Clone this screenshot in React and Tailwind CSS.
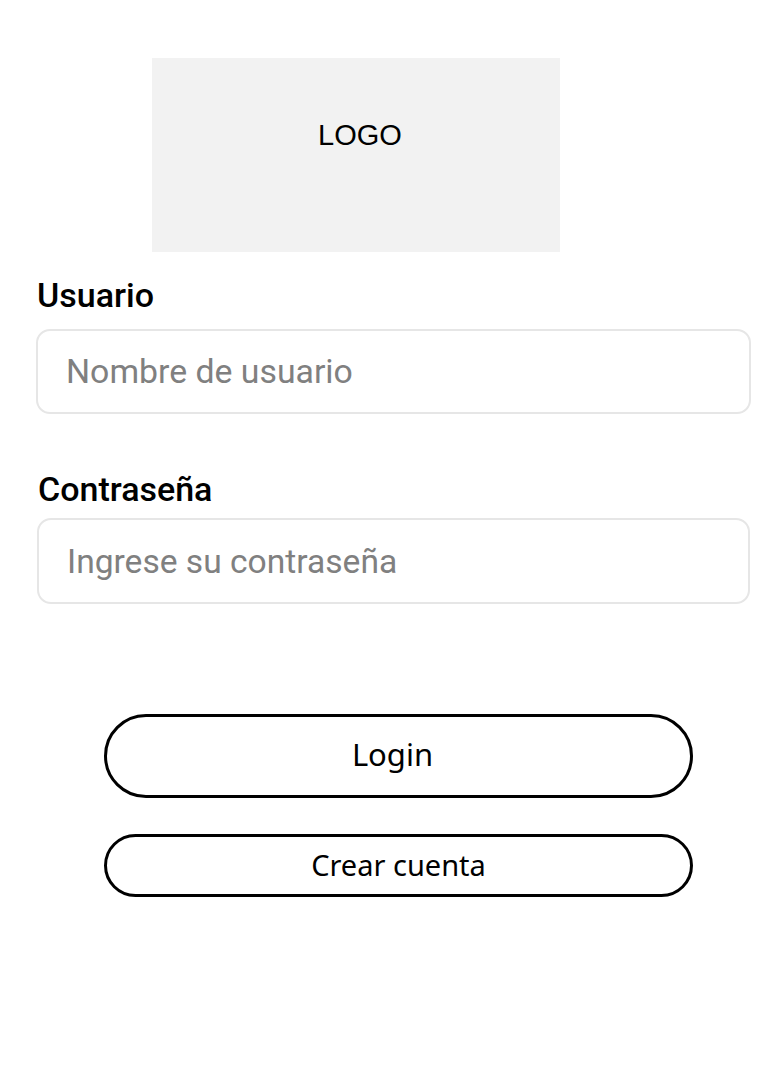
export default function App() {
  return (
    <div className="w-[770px] h-[1080px] bg-white relative overflow-hidden">
      <div className="pt-[58px] pl-[152px]">
        <div className="w-[408px] h-[194px] bg-[#f2f2f2] flex justify-center pt-[61px] pl-[8px]">
          <span className="text-[29px] leading-[33px] text-black" style={{ fontFamily: '"Liberation Sans", Arial, sans-serif' }}>LOGO</span>
        </div>
      </div>
      <div className="pl-[36px] pr-[19px]" style={{ fontFamily: 'Roboto, "Noto Sans", sans-serif' }}>
        <label className="block mt-[24px] pl-[1px] text-[34px] leading-[38px] font-medium text-black">Usuario</label>
        <input
          type="text"
          placeholder="Nombre de usuario"
          className="mt-[15px] block w-[715px] h-[85px] rounded-[14px] border-2 border-[#e6e6e6] px-[28px] text-[33.8px] text-black placeholder:text-[#808080] outline-none bg-white"
        />
        <label className="block mt-[56px] pl-[2px] text-[34px] leading-[38px] font-medium text-black">Contraseña</label>
        <input
          type="password"
          placeholder="Ingrese su contraseña"
          className="mt-[10px] ml-[1px] block w-[713px] h-[86px] rounded-[14px] border-2 border-[#e6e6e6] px-[28px] text-[33.6px] text-black placeholder:text-[#808080] outline-none bg-white"
        />
      </div>
      <div className="pl-[104px] pt-[110px] flex flex-col gap-[36px]" style={{ fontFamily: '"Noto Sans", "Open Sans", sans-serif' }}>
        <button className="w-[589px] h-[84px] rounded-full border-[3.5px] border-black bg-white text-[31px] text-black pr-[12px] pb-[4px]">
          Login
        </button>
        <button className="w-[589px] h-[63px] rounded-full border-[3.5px] border-black bg-white text-[29px] text-black pb-[2px]">
          Crear cuenta
        </button>
      </div>
    </div>
  );
}
